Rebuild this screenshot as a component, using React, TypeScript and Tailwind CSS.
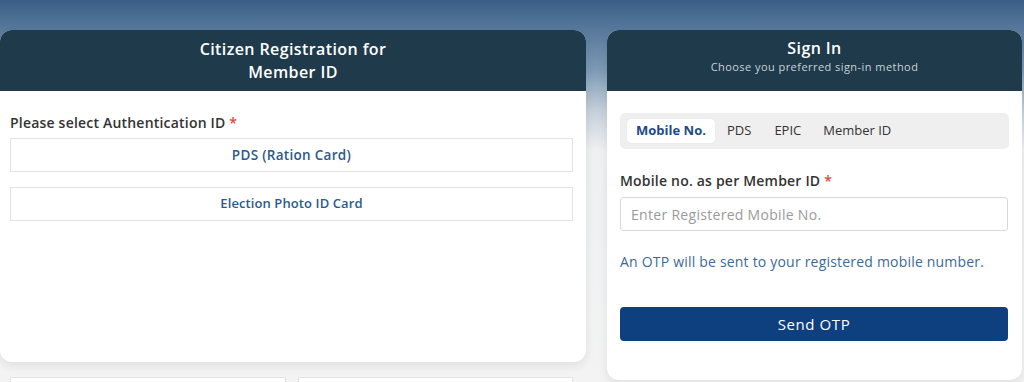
import React from "react";

export default function App() {
  return (
    <div
      className="w-[1024px] h-[382px] overflow-hidden bg-[linear-gradient(180deg,#3a5f87_0px,#58799c_30px,#7d99b4_70px,#c4cfd9_110px,#eef0f2_150px,#f3f3f3_382px)]"
      style={{ fontFamily: '"Open Sans", "Liberation Sans", sans-serif' }}
    >
      <div className="flex gap-[21px] pt-[30px] pr-[2px]">
        {/* Left column */}
        <div className="w-[586px] flex flex-col gap-[15px]">
          <div className="bg-white rounded-[12px] shadow-[0_4px_10px_rgba(0,0,0,0.08)] overflow-hidden h-[332px]">
            <div className="h-[61px] bg-[#1f3a4a] flex flex-col items-center justify-center text-white text-[16px] tracking-[0.4px] font-semibold leading-[23px]">
              <div>Citizen Registration for</div>
              <div>Member ID</div>
            </div>
            <div className="px-[10px] pt-[22px]">
              <div className="text-[14px] tracking-[0.2px] font-semibold text-[#333] leading-[20px]">
                Please select Authentication ID <span className="text-[#e0463b]">*</span>
              </div>
              <div className="mt-[5px] flex flex-col gap-[15px] w-[563px]">
                <div className="h-[34px] border border-[#e3e3e3] flex items-center justify-center text-[13.5px] tracking-[0.3px] font-semibold text-[#2c5a8c]">
                  PDS (Ration Card)
                </div>
                <div className="h-[34px] border border-[#e3e3e3] flex items-center justify-center text-[13px] tracking-[0.1px] font-semibold text-[#2c5a8c]">
                  Election Photo ID Card
                </div>
              </div>
            </div>
          </div>
          <div className="flex gap-[12px] px-[10px]">
            <div className="w-[276px] h-[30px] border border-[#e3e3e3] bg-white"></div>
            <div className="w-[275px] h-[30px] border border-[#e3e3e3] bg-white"></div>
          </div>
        </div>

        {/* Right column */}
        <div className="w-[415px] bg-white rounded-[12px] shadow-[0_4px_10px_rgba(0,0,0,0.08)] overflow-hidden h-[350px]">
          <div className="h-[61px] bg-[#1f3a4a] flex flex-col items-center pt-[7px] text-white">
            <div className="text-[16px] tracking-[0.4px] font-semibold leading-[22px]">Sign In</div>
            <div className="text-[11px] tracking-[0.45px] text-[#c8d2d8] leading-[14px] mt-[1px]">
              Choose you preferred sign-in method
            </div>
          </div>
          <div className="px-[13px] pt-[22px]">
            <div className="h-[36px] bg-[#efefef] rounded-[5px] flex items-center px-[7px] w-[389px]">
              <div className="h-[24px] w-[88px] bg-white rounded-[4px] flex items-center justify-center text-[13px] font-bold text-[#1c4a88] shadow-[0_0_1px_rgba(0,0,0,0.15)]">
                Mobile No.
              </div>
              <div className="ml-[12px] text-[13px] text-[#333]">PDS</div>
              <div className="ml-[23px] text-[13px] text-[#333]">EPIC</div>
              <div className="ml-[22px] text-[13px] text-[#333]">Member ID</div>
            </div>
            <div className="mt-[22px] text-[14px] tracking-[0.2px] font-semibold text-[#333] leading-[20px]">
              Mobile no. as per Member ID <span className="text-[#e0463b]">*</span>
            </div>
            <div className="mt-[6px] h-[34px] w-[388px] border border-[#d8d8d8] rounded-[3px] flex items-center px-[10px] text-[14px] tracking-[0.3px] text-[#9a9a9a]">
              Enter Registered Mobile No.
            </div>
            <div className="mt-[21px] text-[14px] tracking-[0.2px] text-[#3c6a98] leading-[20px]">
              An OTP will be sent to your registered mobile number.
            </div>
            <div className="mt-[35px] h-[34px] w-[388px] bg-[#0e3f7e] rounded-[4px] flex items-center justify-center text-white text-[15px] tracking-[0.6px]">
              Send OTP
            </div>
          </div>
        </div>
      </div>
    </div>
  );
}
